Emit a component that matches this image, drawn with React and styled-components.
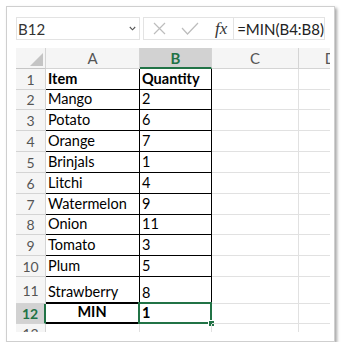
import React from "react";
import styled, { createGlobalStyle } from "styled-components";

const GREEN = "#217346";

const GlobalStyle = createGlobalStyle`
  body {
    margin: 0;
    background: #fff;
    font-family: Lato, "Liberation Sans", sans-serif;
  }
`;

const Frame = styled.div`
  box-sizing: border-box;
  margin: 6px 0 0 6px;
  width: 329px;
  height: 336px;
  border: 1px solid #cfcfcf;
  box-shadow: 2px 2px 3px rgba(0, 0, 0, 0.35);
  padding: 10px 4px 0 9px;
  background: #fff;
  overflow: hidden;
`;

const FormulaBar = styled.div`
  display: flex;
  height: 23px;
  gap: 3px;
`;

const NameBox = styled.div`
  box-sizing: border-box;
  width: 124px;
  border: 1px solid #e3e3e3;
  display: flex;
  align-items: center;
  justify-content: space-between;
  padding: 0 3px 0 1px;
  font-size: 15px;
  color: #333;
`;

const FormulaBox = styled.div`
  box-sizing: border-box;
  width: 182px;
  border: 1px solid #e3e3e3;
  display: flex;
`;

const Tools = styled.div`
  width: 95px;
  display: flex;
  align-items: center;
  padding-left: 9px;
  box-sizing: border-box;
`;

const ToolIcon = styled.svg`
  margin-right: ${(p) => p.$gap}px;
`;

const Fx = styled.span`
  font-family: "Liberation Serif", serif;
  font-style: italic;
  font-size: 17px;
  color: #333;
  margin-left: 2px;
`;

const FormulaText = styled.div`
  flex: 1;
  border-left: 1px solid #e3e3e3;
  display: flex;
  align-items: center;
  padding-left: 3px;
  font-size: 15px;
  color: #222;
`;

const Grid = styled.div`
  margin-top: 8px;
  width: 314px;
  height: 284px;
  overflow: hidden;
  display: grid;
  grid-template-columns: 30px 94px 72px 87px 64px;
  grid-template-rows: 21px 21px 20px 21px 21px 21px 21px 21px 20px 21px 21px 27px 20px 20px;
`;

const Head = styled.div`
  box-sizing: border-box;
  background: ${(p) => (p.$active ? "#d2d2d2" : "#f5f5f5")};
  color: ${(p) => (p.$active ? GREEN : "#555")};
  font-weight: ${(p) => (p.$active ? 700 : 400)};
  font-size: ${(p) => (p.$row ? 14 : 15)}px;
  border-right: ${(p) => (p.$row && p.$active ? `2px solid ${GREEN}` : "1px solid #d4d4d4")};
  border-bottom: ${(p) => (!p.$row && p.$active ? `2px solid ${GREEN}` : "1px solid #d4d4d4")};
  display: flex;
  align-items: center;
  justify-content: center;
`;

const Corner = styled.div`
  box-sizing: border-box;
  background: #f5f5f5;
  border-right: 1px solid #d4d4d4;
  border-bottom: 1px solid #c6c6c6;
  position: relative;
  &::after {
    content: "";
    position: absolute;
    right: 2px;
    bottom: 2px;
    border-style: solid;
    border-width: 0 0 13px 13px;
    border-color: transparent transparent #c4c4c4 transparent;
  }
`;

const Cell = styled.div`
  box-sizing: border-box;
  position: relative;
  display: flex;
  align-items: flex-end;
  justify-content: ${(p) => (p.$center ? "center" : "flex-start")};
  padding: 0 3px 1px 2px;
  font-size: 14.5px;
  line-height: 18px;
  font-weight: ${(p) => (p.$bold ? 700 : 400)};
  color: #000;
  white-space: nowrap;
  border-right: 1px solid ${(p) => (p.$boxed ? "#000" : "#e1e1e1")};
  border-bottom: ${(p) => p.$bottom || 1}px solid ${(p) => (p.$boxed ? "#000" : "#e1e1e1")};
`;

const Selection = styled.div`
  position: absolute;
  top: -2px;
  left: -2px;
  right: -1px;
  bottom: -1px;
  border: 2px solid ${GREEN};
`;

const Handle = styled.div`
  position: absolute;
  right: -4px;
  bottom: -4px;
  width: 5px;
  height: 5px;
  background: ${GREEN};
  border: 1px solid #fff;
`;

const items = [
  ["Item", "Quantity"],
  ["Mango", "2"],
  ["Potato", "6"],
  ["Orange", "7"],
  ["Brinjals", "1"],
  ["Litchi", "4"],
  ["Watermelon", "9"],
  ["Onion", "11"],
  ["Tomato", "3"],
  ["Plum", "5"],
  ["Strawberry", "8"],
];

export default function App() {
  return (
    <>
      <GlobalStyle />
      <Frame>
        <FormulaBar>
          <NameBox>
            B12
            <svg width="7" height="5" viewBox="0 0 7 5">
              <path d="M0.8 1 L3.5 3.8 L6.2 1" fill="none" stroke="#555" strokeWidth="1.1" />
            </svg>
          </NameBox>
          <FormulaBox>
            <Tools>
              <ToolIcon $gap={15} width="13" height="13" viewBox="0 0 13 13">
                <path d="M1 1 L12 12 M12 1 L1 12" stroke="#bdbdbd" strokeWidth="1.2" />
              </ToolIcon>
              <ToolIcon $gap={14} width="18" height="13" viewBox="0 0 18 13">
                <path d="M1 6 L6.5 12 L17 1" fill="none" stroke="#bdbdbd" strokeWidth="1.2" />
              </ToolIcon>
              <Fx>fx</Fx>
            </Tools>
            <FormulaText>=MIN(B4:B8)</FormulaText>
          </FormulaBox>
        </FormulaBar>

        <Grid>
          <Corner />
          <Head>A</Head>
          <Head $active>B</Head>
          <Head>C</Head>
          <Head>D</Head>

          {items.map(([item, qty], i) => (
            <React.Fragment key={item}>
              <Head $row>{i + 1}</Head>
              <Cell $boxed $bold={i === 0} $bottom={i === 10 ? 2 : 1}>
                {item}
              </Cell>
              <Cell $boxed $bold={i === 0}>
                {qty}
              </Cell>
              <Cell />
              <Cell />
            </React.Fragment>
          ))}

          <Head $row $active>12</Head>
          <Cell $boxed $bold $center $bottom={2}>
            MIN
          </Cell>
          <Cell $bold>
            1
            <Selection />
            <Handle />
          </Cell>
          <Cell />
          <Cell />

          <Head $row>13</Head>
          <Cell />
          <Cell />
          <Cell />
          <Cell />
        </Grid>
      </Frame>
    </>
  );
}
